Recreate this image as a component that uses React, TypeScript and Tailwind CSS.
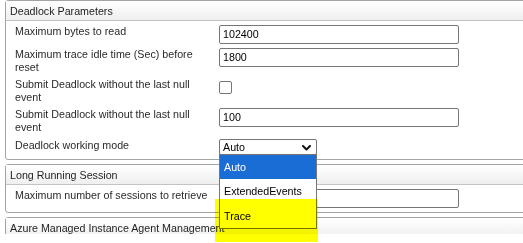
import React from "react";

function Header({ title }: { title: string }) {
  return (
    <div className="h-[20px] border-b border-[#c4c4c4] bg-gradient-to-b from-white to-[#efefef] pl-[4px] leading-[20px] text-[#1e1e1e]">
      {title}
    </div>
  );
}

function TextBox({ value }: { value: string }) {
  return (
    <div className="h-[19px] w-[240px] rounded-[2px] border border-[#767676] bg-white pl-[3px] leading-[17px] text-black">
      {value}
    </div>
  );
}

function Label({ children }: { children: React.ReactNode }) {
  return <div className="leading-[13px] text-[#2a2a2a]">{children}</div>;
}

export default function App() {
  return (
    <div className="relative h-[243px] w-[523px] overflow-hidden bg-white pl-[5px] font-['Liberation_Sans',Arial,sans-serif] text-[10.7px]">
      <div className="flex flex-col gap-[4px]">
        {/* Deadlock Parameters */}
        <div className="w-[580px] rounded-[3px] border border-[#a4a4a4]">
          <Header title="Deadlock Parameters" />
          <div className="grid grid-cols-[196px_240px] gap-x-[8px] pb-[4px] pl-[9px] pt-[4px]">
            <Label>Maximum bytes to read</Label>
            <TextBox value="102400" />

            <div className="col-span-2 h-[4px]" />
            <Label>
              Maximum trace idle time (Sec) before reset
            </Label>
            <div>
              <TextBox value="1800" />
            </div>

            <div className="col-span-2 h-[4px]" />
            <Label>Submit Deadlock without the last null event</Label>
            <div className="pt-[3px]">
              <div className="h-[13px] w-[13px] rounded-[2px] border border-[#767676] bg-white" />
            </div>

            <div className="col-span-2 h-[4px]" />
            <Label>Submit Deadlock without the last null event</Label>
            <div>
              <TextBox value="100" />
            </div>

            <div className="col-span-2 h-[5px]" />
            <Label>Deadlock working mode</Label>
            <div className="relative z-10 h-[16px] w-[98px]">
              <div className="flex h-[16px] w-[98px] items-center justify-between rounded-[2px] border border-[#767676] bg-white pl-[3px] pr-[5px] leading-[14px] text-black">
                <span>Auto</span>
                <svg width="9" height="6" viewBox="0 0 9 6" className="mt-[1px]">
                  <polyline points="1,1 4.5,4.5 8,1" fill="none" stroke="#111" strokeWidth="2" strokeLinecap="round" strokeLinejoin="round" />
                </svg>
              </div>
              <div className="absolute left-0 top-[15px] w-[98px] border border-[#767676] bg-white text-black">
                <div className="h-[24px] bg-[#1b6dd6] pl-[4px] leading-[24px] text-white">Auto</div>
                <div className="h-[25px] pl-[4px] leading-[25px]">ExtendedEvents</div>
                <div className="h-[24px] pl-[4px] leading-[24px]">Trace</div>
              </div>
            </div>
          </div>
        </div>

        {/* Long Running Session */}
        <div className="w-[580px] rounded-[3px] border border-[#a4a4a4]">
          <Header title="Long Running Session" />
          <div className="grid grid-cols-[196px_240px] gap-x-[8px] pb-[4px] pl-[9px] pt-[4px]">
            <Label>Maximum number of sessions to retrieve</Label>
            <TextBox value="" />
          </div>
        </div>

        {/* Azure Managed Instance Agent Management */}
        <div className="h-[17px] overflow-hidden">
          <div className="w-[580px] rounded-[3px] border border-[#a4a4a4]">
            <Header title="Azure Managed Instance Agent Management" />
            <div className="h-[20px]" />
          </div>
        </div>
      </div>

      {/* highlighter mark */}
      <div className="pointer-events-none absolute left-[215px] top-[199px] z-20 h-[43px] w-[103px] bg-[#ffff00] mix-blend-multiply" />
    </div>
  );
}
